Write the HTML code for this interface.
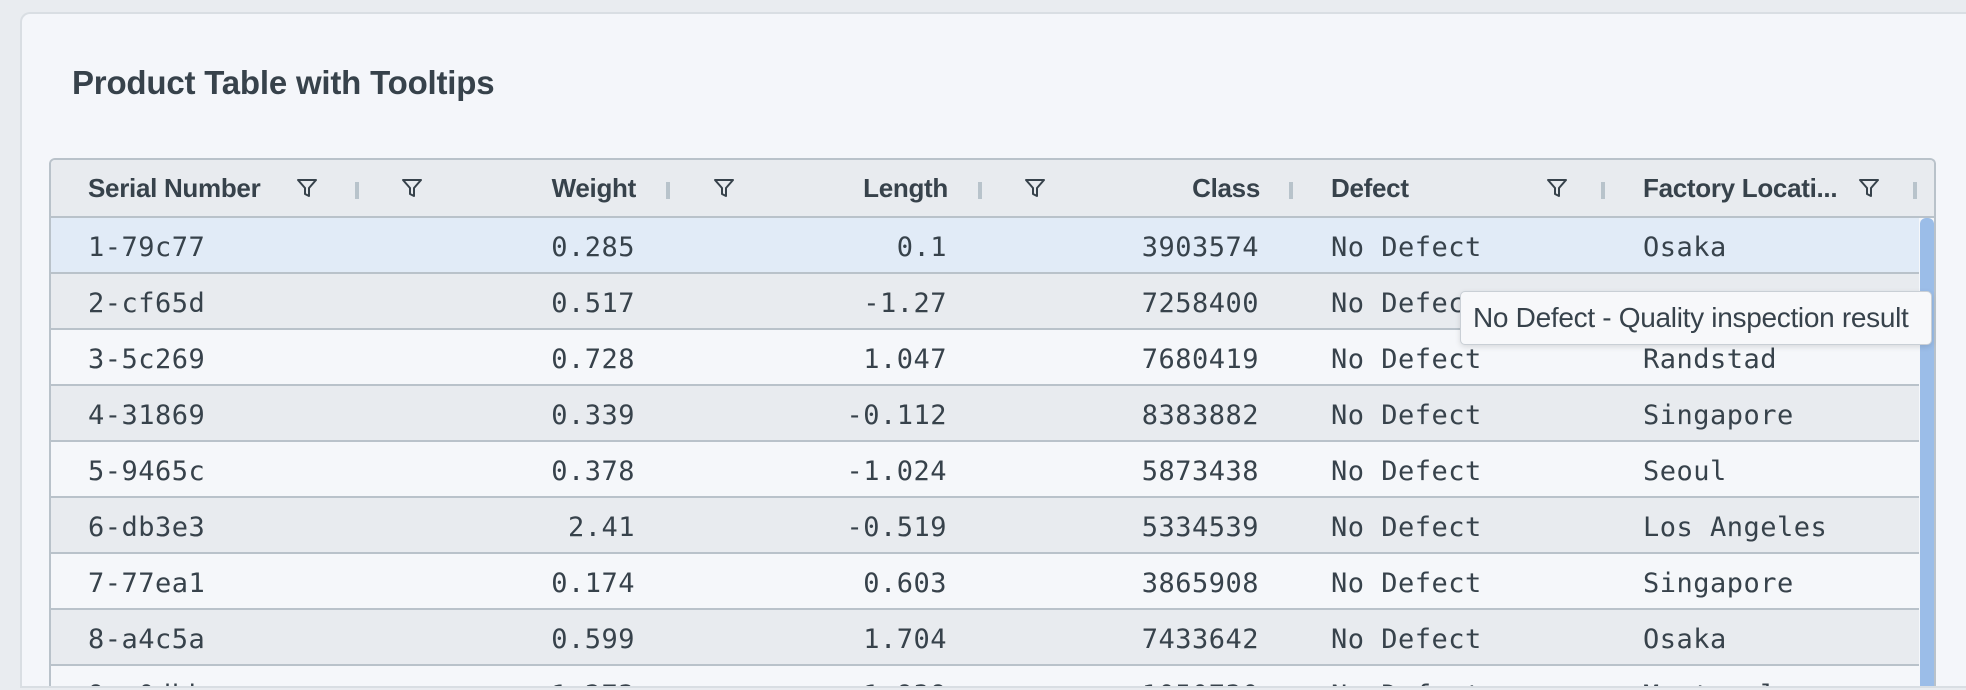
<!DOCTYPE html>
<html><head><meta charset="utf-8"><style>
*{margin:0;padding:0;box-sizing:border-box}
html,body{width:1966px;height:690px;overflow:hidden}
body{background:#e9ecf0;position:relative;font-family:"Liberation Sans",sans-serif;color:#37424b}
.card{position:absolute;left:20px;top:12px;width:1946px;height:676px;background:#f4f6fa;border:2px solid #d9dee3;border-bottom:none;border-right:none;border-radius:10px 0 0 0}
.title{position:absolute;left:72px;top:64px;font-size:33px;font-weight:bold;color:#37424b;letter-spacing:-0.2px}
.table{position:absolute;left:49px;top:158px;width:1887px;height:528px;border:2px solid #b9c2ca;border-bottom:none;border-radius:6px 6px 0 0;overflow:hidden;background:#f5f7fa}
.hdr{position:absolute;left:0;top:0;width:100%;height:58px;background:#e8ebef;border-bottom:2px solid #b9c2ca}
.row{position:absolute;left:0;width:1868px;height:56px;border-bottom:2px solid #b9c2ca}
.c{position:absolute;top:0;height:100%;display:flex;align-items:center;white-space:nowrap}
.h{font-size:26px;font-weight:bold;letter-spacing:-0.3px}
.d{font-family:"DejaVu Sans Mono","Liberation Mono",monospace;font-size:27px;padding-top:3px;letter-spacing:0.5px}
.sep{position:absolute;top:22px;width:4px;height:17px;background:#b8c3cb}
.ic{position:absolute;top:18px;width:22px;height:20px}
.tip{position:absolute;left:1460px;top:291px;width:472px;height:54px;background:#f7f8fa;border:1.5px solid #c9cfd5;border-radius:5px;box-shadow:0 2px 6px rgba(0,0,0,.12);font-size:28px;display:flex;align-items:center;padding-left:12px;color:#37424b;white-space:nowrap;letter-spacing:-0.3px;overflow:hidden}
.sb{position:absolute;left:1869px;top:58px;width:14px;height:470px;background:#9bbde8;border-radius:6px 6px 0 0}
.bot{position:absolute;left:20px;top:686px;width:1946px;height:4px;background:#e9ecf0;border-top:2px solid #d9dee3}
</style></head><body>
<div class="card"></div>
<div class="title">Product Table with Tooltips</div>
<div class="table">
<div class="hdr">
 <div class="c h" style="left:37px">Serial Number</div>
 <svg class="ic" style="left:245px" viewBox="0 0 22 20"><path d="M2 2H20L13 10V18L9 16V10Z" fill="none" stroke="#37424b" stroke-width="2" stroke-linejoin="round"/></svg>
 <div class="sep" style="left:304px"></div>
 <svg class="ic" style="left:350px" viewBox="0 0 22 20"><path d="M2 2H20L13 10V18L9 16V10Z" fill="none" stroke="#37424b" stroke-width="2" stroke-linejoin="round"/></svg>
 <div class="c h" style="right:1298px">Weight</div>
 <div class="sep" style="left:615px"></div>
 <svg class="ic" style="left:662px" viewBox="0 0 22 20"><path d="M2 2H20L13 10V18L9 16V10Z" fill="none" stroke="#37424b" stroke-width="2" stroke-linejoin="round"/></svg>
 <div class="c h" style="right:986px">Length</div>
 <div class="sep" style="left:927px"></div>
 <svg class="ic" style="left:973px" viewBox="0 0 22 20"><path d="M2 2H20L13 10V18L9 16V10Z" fill="none" stroke="#37424b" stroke-width="2" stroke-linejoin="round"/></svg>
 <div class="c h" style="right:674px">Class</div>
 <div class="sep" style="left:1238px"></div>
 <div class="c h" style="left:1280px">Defect</div>
 <svg class="ic" style="left:1495px" viewBox="0 0 22 20"><path d="M2 2H20L13 10V18L9 16V10Z" fill="none" stroke="#37424b" stroke-width="2" stroke-linejoin="round"/></svg>
 <div class="sep" style="left:1550px"></div>
 <div class="c h" style="left:1592px">Factory Locati...</div>
 <svg class="ic" style="left:1807px" viewBox="0 0 22 20"><path d="M2 2H20L13 10V18L9 16V10Z" fill="none" stroke="#37424b" stroke-width="2" stroke-linejoin="round"/></svg>
 <div class="sep" style="left:1862px"></div>
</div>
</div>
<div class="tip">No Defect - Quality inspection result</div>
<div class="bot"></div>
<script>
var rows=[["1-79c77","0.285","0.1","3903574","Osaka"],["2-cf65d","0.517","-1.27","7258400",""],["3-5c269","0.728","1.047","7680419","Randstad"],["4-31869","0.339","-0.112","8383882","Singapore"],["5-9465c","0.378","-1.024","5873438","Seoul"],["6-db3e3","2.41","-0.519","5334539","Los Angeles"],["7-77ea1","0.174","0.603","3865908","Singapore"],["8-a4c5a","0.599","1.704","7433642","Osaka"],["9-e0dbb","1.273","1.939","1050730","Montreal"]];
var t=document.querySelector('.table'),h='';
rows.forEach(function(r,i){
 var bg=i==0?'#e1ebf7':(i%2?'#e8ebef':'#f5f7fa');
 var hh=i==8?22:56;
 h+='<div class="row" style="top:'+(58+i*56)+'px;height:'+hh+'px;overflow:hidden;'+(i==8?'border-bottom:none;':'')+'background:'+bg+'"><div style="position:absolute;left:0;top:0;width:100%;height:56px">'+
 '<div class="c d" style="left:37px">'+r[0]+'</div>'+
 '<div class="c d" style="right:1284px">'+r[1]+'</div>'+
 '<div class="c d" style="right:972px">'+r[2]+'</div>'+
 '<div class="c d" style="right:660px">'+r[3]+'</div>'+
 '<div class="c d" style="left:1280px">No Defect</div>'+
 '<div class="c d" style="left:1592px">'+r[4]+'</div></div></div>';
});
h+='<div class="sb"></div>';
t.insertAdjacentHTML('beforeend',h);
</script>
</body></html>
